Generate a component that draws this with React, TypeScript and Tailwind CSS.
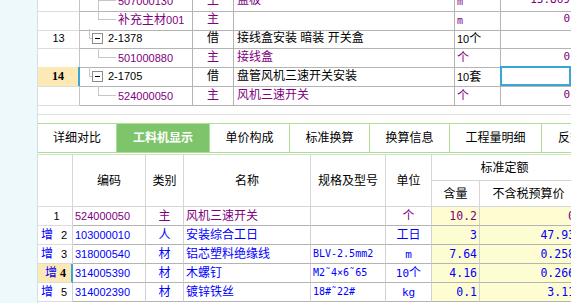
import React from 'react';

const cjk = "font-['Liberation_Sans','Noto_Sans_CJK_SC',sans-serif]";
const mono = "font-['DejaVu_Sans_Mono','Noto_Sans_CJK_SC',monospace]";
const serif = "font-['Liberation_Serif','Noto_Sans_CJK_SC',serif]";

const PURPLE = 'text-[#800080]';
const BLUE = 'text-[#0000ff]';

type TopRow = {
  num?: string;
  active?: boolean;
  tree: 'pass' | 'last' | 'parent';
  code: string;
  kind: string;
  name: string;
  unit: string;
  value: string;
  sub: boolean;
  selected?: boolean;
};

const topRows: TopRow[] = [
  { tree: 'pass', code: '507000130', kind: '主', name: '盖板', unit: 'm', value: '13.869', sub: true },
  { tree: 'last', code: '补充主材001', kind: '主', name: '', unit: 'm', value: '0', sub: true },
  { num: '13', tree: 'parent', code: '2-1378', kind: '借', name: '接线盒安装 暗装 开关盒', unit: '10个', value: '', sub: false },
  { tree: 'last', code: '501000880', kind: '主', name: '接线盒', unit: '个', value: '0', sub: true },
  { num: '14', active: true, tree: 'parent', code: '2-1705', kind: '借', name: '盘管风机三速开关安装', unit: '10套', value: '', sub: false, selected: true },
  { tree: 'last', code: '524000050', kind: '主', name: '风机三速开关', unit: '个', value: '0', sub: true },
];

type BottomRow = {
  add: boolean;
  num: string;
  code: string;
  kind: string;
  name: string;
  spec: string;
  unit: string;
  qty: string;
  price: string;
  color: string;
  active?: boolean;
};

const bottomRows: BottomRow[] = [
  { add: false, num: '1', code: '524000050', kind: '主', name: '风机三速开关', spec: '', unit: '个', qty: '10.2', price: '0', color: PURPLE },
  { add: true, num: '2', code: '103000010', kind: '人', name: '安装综合工日', spec: '', unit: '工日', qty: '3', price: '47.93', color: BLUE },
  { add: true, num: '3', code: '318000540', kind: '材', name: '铝芯塑料绝缘线', spec: 'BLV-2.5mm2', unit: 'm', qty: '7.64', price: '0.258', color: BLUE },
  { add: true, num: '4', code: '314005390', kind: '材', name: '木螺钉', spec: 'M2˜4×6˜65', unit: '10个', qty: '4.16', price: '0.266', color: BLUE, active: true },
  { add: true, num: '5', code: '314002390', kind: '材', name: '镀锌铁丝', spec: '18#˜22#', unit: 'kg', qty: '0.1', price: '3.11', color: BLUE },
];

const tabs = [
  { label: '详细对比', w: 'w-[79px]' },
  { label: '工料机显示', w: 'w-[93px]', active: true },
  { label: '单价构成', w: 'w-[80px]' },
  { label: '标准换算', w: 'w-[80px]' },
  { label: '换算信息', w: 'w-[80px]' },
  { label: '工程量明细', w: 'w-[92px]' },
  { label: '反查图形工程量', w: 'w-[117px]' },
];

// ascii parts get the small latin font, han characters stay at 12px
function Unit({ text, latin }: { text: string; latin: string }) {
  return (
    <>
      {text
        .split(/([\u4e00-\u9fff]+)/)
        .filter(Boolean)
        .map((p, i) =>
          /[\u4e00-\u9fff]/.test(p) ? (
            <span key={i} className={`${cjk} text-[12px]`}>{p}</span>
          ) : (
            <span key={i} className={latin}>{p}</span>
          )
        )}
    </>
  );
}

function TreeCell({ row }: { row: TopRow }) {
  const line = 'absolute bg-[#c6c6c6]';
  return (
    <div className="relative border-r border-b border-[#b4b4b4] whitespace-nowrap">
      {row.tree === 'parent' ? (
        <>
          <span className={`${line} left-[9px] top-0 h-[9px] w-px`} />
          <span className={`${line} left-[9px] top-[9px] h-px w-[3px]`} />
          <span className="absolute left-[12px] top-[4px] w-[11px] h-[11px] border border-[#8c8c8c] bg-white flex items-center justify-center">
            <span className="w-[5px] h-px bg-black" />
          </span>
          <span className={`absolute left-[28px] top-0 text-[11px] text-black ${cjk}`}>{row.code}</span>
        </>
      ) : (
        <>
          <span className={`${line} left-[18px] top-0 w-px ${row.tree === 'pass' ? 'h-full' : 'h-[9px]'}`} />
          <span className={`${line} left-[18px] top-[9px] h-px w-[18px]`} />
          <span className={`absolute left-[38px] top-0 ${PURPLE}`}>
            <Unit text={row.code} latin={`${cjk} text-[11px]`} />
          </span>
        </>
      )}
    </div>
  );
}

function TopTable() {
  return (
    <div className="h-[115px] shrink-0 overflow-hidden border-b border-[#e0e0e0]">
      <div className="-mt-[9px]">
        {topRows.map((row, i) => {
          const color = row.sub ? PURPLE : 'text-black';
          return (
            <div key={i} className={`grid grid-cols-[42px_113px_41px_221px_46px_1fr] h-[19px] leading-[18px] ${cjk}`}>
              <div
                className={`border-b border-b-[#dcdcdc] text-center ${
                  row.active
                    ? `bg-[#fde9b5] border-r-2 border-r-[#3aa6d3] text-[12px] font-bold ${serif}`
                    : 'border-r border-r-[#c4c4c4] text-[11px]'
                }`}
              >
                {row.num}
              </div>
              <TreeCell row={row} />
              <div className={`border-r border-b border-[#b4b4b4] text-center text-[12px] ${color}`}>{row.kind}</div>
              <div className={`border-r border-b border-[#b4b4b4] pl-[3px] text-[12px] whitespace-nowrap overflow-hidden ${color}`}>{row.name}</div>
              <div className={`border-r border-b border-[#b4b4b4] pl-[2px] whitespace-nowrap ${color}`}>
                <Unit text={row.unit} latin={row.sub ? `${mono} text-[10px]` : `${cjk} text-[11px]`} />
              </div>
              <div className={`relative border-b border-[#b4b4b4] text-right pr-[1px] text-[11px] ${mono} ${color}`}>
                {row.value}
                {row.selected && <div className="absolute -left-px -top-px right-0 bottom-0 border-2 border-[#3aa6d3]" />}
              </div>
            </div>
          );
        })}
      </div>
    </div>
  );
}

function TabBar() {
  return (
    <div className={`mt-[8px] h-[30px] shrink-0 flex border-y border-[#addd96] ${cjk} text-[12px] whitespace-nowrap`}>
      {tabs.map((t) => (
        <div
          key={t.label}
          className={`${t.w} shrink-0 flex items-center justify-center border-r border-[#addd96] ${
            t.active ? 'bg-[#7ec46a] text-white font-bold' : 'text-black bg-white'
          }`}
        >
          {t.label}
        </div>
      ))}
    </div>
  );
}

const cols = 'grid-cols-[35px_73px_38px_127px_75px_46px_48px_98px]';

function BottomTable() {
  const h = 'flex items-center justify-center border-r border-b border-[#d6d6d6]';
  return (
    <div className={`w-[540px] ${cjk} text-[12px]`}>
      <div className={`grid ${cols} grid-rows-[26px_26px] text-black`}>
        <div className={`${h} row-span-2 border-b-[#dcdcdc]`} />
        <div className={`${h} row-span-2`}>编码</div>
        <div className={`${h} row-span-2`}>类别</div>
        <div className={`${h} row-span-2`}>名称</div>
        <div className={`${h} row-span-2`}>规格及型号</div>
        <div className={`${h} row-span-2`}>单位</div>
        <div className={`${h} col-span-2`}>标准定额</div>
        <div className={h}>含量</div>
        <div className={h}>不含税预算价</div>
      </div>
      {bottomRows.map((r) => {
        const cell = 'border-r border-b border-r-[#d2d2d2] border-b-[#b4b4b4] whitespace-nowrap overflow-hidden';
        return (
          <div key={r.num} className={`grid ${cols} h-[19px] leading-[18px] ${r.color}`}>
            <div
              className={`flex border-b border-b-[#dcdcdc] ${
                r.active ? 'bg-[#fde9b5] border-r-2 border-r-[#3aa6d3] pl-[7px]' : 'border-r border-r-[#d2d2d2] pl-[3px]'
              } ${r.add ? 'justify-between pr-[5px]' : 'justify-center'}`}
            >
              {r.add && <span className={BLUE}>增</span>}
              <span className={`text-black ${r.active ? `font-bold ${serif} text-[12px]` : 'text-[11px]'}`}>{r.num}</span>
            </div>
            <div className={`${cell} pl-[2px] text-[11px]`}>{r.code}</div>
            <div className={`${cell} text-center`}>{r.kind}</div>
            <div className={`${cell} pl-[2px]`}>{r.name}</div>
            <div className={`${cell} pl-[2px] ${mono} text-[10px]`}>{r.spec}</div>
            <div className={`${cell} text-center`}>
              <Unit text={r.unit} latin={`${mono} text-[11px]`} />
            </div>
            <div className={`${cell} bg-[#fefdd2] text-right pr-[2px] ${mono} text-[11.5px]`}>{r.qty}</div>
            <div className={`${cell} bg-[#fefdd2] text-right pr-[2px] ${mono} text-[11.5px]`}>{r.price}</div>
          </div>
        );
      })}
    </div>
  );
}

export default function App() {
  return (
    <div className="w-[571px] h-[303px] overflow-hidden bg-white flex">
      <div className="w-[38px] shrink-0 bg-[#eef9fc] border-r border-[#d3dfe3]" />
      <div className="flex-1 min-w-0 overflow-hidden flex flex-col">
        <TopTable />
        <TabBar />
        <div className="h-[2px] shrink-0 border-b border-[#cfe6c4]" />
        <BottomTable />
      </div>
    </div>
  );
}
